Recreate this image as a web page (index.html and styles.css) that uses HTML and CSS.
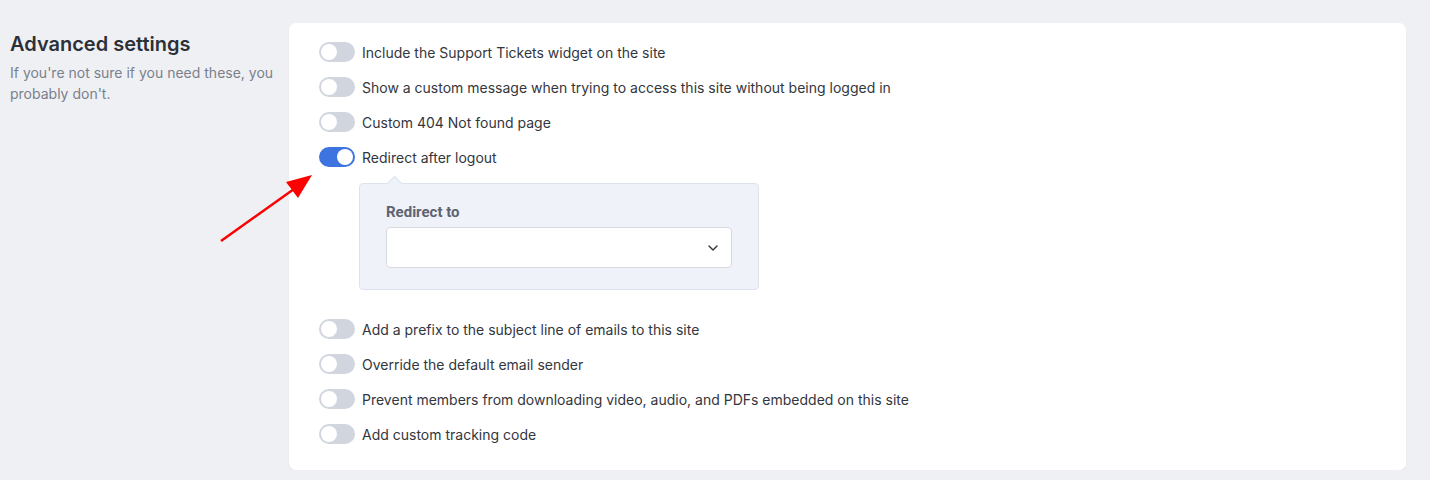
FILE: index.html
```html
<!DOCTYPE html>
<html lang="en">
<head>
<meta charset="UTF-8">
<meta name="viewport" content="width=device-width, initial-scale=1.0">
<title>Advanced settings</title>
<link rel="stylesheet" href="styles.css">
</head>
<body>

<div class="section">
    <div class="section-info">
        <h2>Advanced settings</h2>
        <p>If you're not sure if you need these, you probably don't.</p>
    </div>

    <div class="card">
        <label class="row"><span class="toggle"></span>Include the Support Tickets widget on the site</label>
        <label class="row"><span class="toggle"></span>Show a custom message when trying to access this site without being logged in</label>
        <label class="row"><span class="toggle"></span>Custom 404 Not found page</label>
        <label class="row"><span class="toggle on"></span>Redirect after logout</label>

        <div class="sub-panel">
            <div class="field-label">Redirect to</div>
            <div class="select">
                <svg width="10" height="6" viewBox="0 0 10 6"><path d="M1 1l4 4 4-4" fill="none" stroke="#333" stroke-width="1.4" stroke-linecap="round" stroke-linejoin="round"/></svg>
            </div>
        </div>

        <label class="row"><span class="toggle"></span>Add a prefix to the subject line of emails to this site</label>
        <label class="row"><span class="toggle"></span>Override the default email sender</label>
        <label class="row"><span class="toggle"></span>Prevent members from downloading video, audio, and PDFs embedded on this site</label>
        <label class="row"><span class="toggle"></span>Add custom tracking code</label>
    </div>
</div>

<!-- annotation arrow -->
<svg class="pointer" width="110" height="90" viewBox="0 0 110 90">
    <line x1="9" y1="79" x2="82" y2="27" stroke="#f00" stroke-width="2.5"/>
    <polygon points="100,13 74,20 86,36" fill="#f00"/>
</svg>

</body>
</html>
```

FILE: styles.css
```css
body {
    font-family: Inter, "Noto Sans", sans-serif;
    background-color: #eff0f4;
    margin: 0;
    padding: 23px 24px 0 10px;
    color: #33363d;
}

.section {
    display: flex;
}

.section-info {
    width: 279px;
    flex-shrink: 0;
}

.section-info h2 {
    margin: 9px 0 0;
    font-size: 20px;
    font-weight: 600;
    color: #2c3038;
    line-height: 24px;
}

.section-info p {
    margin: 6px 0 0;
    font-size: 14px;
    line-height: 21px;
    color: #7b808b;
    padding-right: 8px;
}

.card {
    flex: 1;
    background-color: #fff;
    border-radius: 7px;
    box-shadow: 0 1px 2px rgba(0, 0, 0, 0.05);
    padding: 19px 30px 26px;
    display: flex;
    flex-direction: column;
    gap: 15px;
}

.row {
    display: flex;
    align-items: center;
    gap: 7px;
    height: 20px;
    font-size: 14px;
}

.toggle {
    width: 36px;
    height: 20px;
    border-radius: 10px;
    background-color: #d1d5de;
    position: relative;
    flex-shrink: 0;
}

.toggle::after {
    content: "";
    position: absolute;
    top: 2px;
    left: 2px;
    width: 16px;
    height: 16px;
    border-radius: 50%;
    background-color: #fff;
}

.toggle.on {
    background-color: #3e74e0;
}

.toggle.on::after {
    left: 18px;
}

.sub-panel {
    margin: 1px 0 14px 40px;
    width: 400px;
    box-sizing: border-box;
    background-color: #eff2f8;
    border: 1px solid #dde3ee;
    border-radius: 4px;
    padding: 20px 26px 21px;
    position: relative;
}

.sub-panel::before {
    content: "";
    position: absolute;
    top: -6px;
    left: 29px;
    width: 10px;
    height: 10px;
    background-color: #eff2f8;
    border-left: 1px solid #dde3ee;
    border-top: 1px solid #dde3ee;
    transform: rotate(45deg);
}

.field-label {
    font-family: Roboto, sans-serif;
    font-weight: bold;
    font-size: 15px;
    color: #5d6372;
    line-height: 17px;
    margin-bottom: 6px;
}

.select {
    height: 41px;
    box-sizing: border-box;
    background-color: #fff;
    border: 1px solid #d6d9df;
    border-radius: 4px;
    display: flex;
    align-items: center;
    justify-content: flex-end;
    padding-right: 13px;
}

.pointer {
    position: absolute;
    left: 212px;
    top: 162px;
}
```
